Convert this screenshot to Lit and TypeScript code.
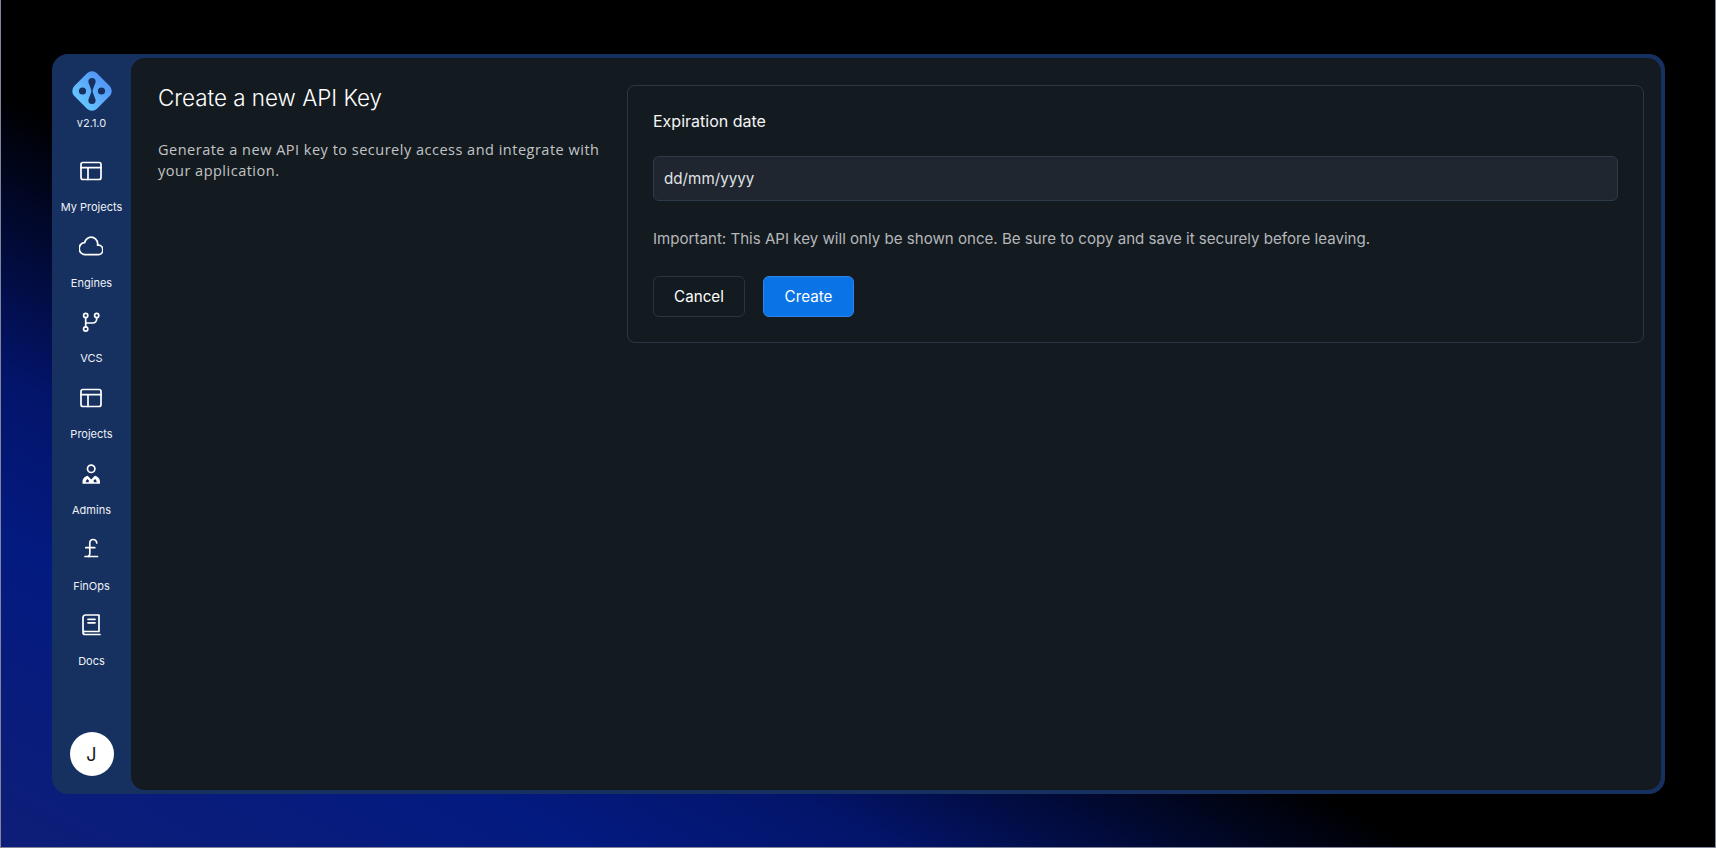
import { LitElement, html, css, svg } from "lit";
import { customElement } from "lit/decorators.js";

const layout = svg`<rect x="2" y="3.5" width="20" height="17" rx="2"/><path d="M2 8.700h20M9 8.700v11.800"/>`;
const cloud = svg`<path vector-effect="non-scaling-stroke" transform="translate(12 12.050) scale(1.180 1.340) translate(-12 -11.650)" d="M6.657 18c-2.572 0-4.657-2.007-4.657-4.483 0-2.475 2.085-4.482 4.657-4.482.393-1.762 1.794-3.2 3.675-3.773 1.88-.572 3.956-.193 5.444 1 1.488 1.19 2.162 3.007 1.77 4.769h.99c1.913 0 3.464 1.56 3.464 3.486 0 1.927-1.551 3.487-3.465 3.487H6.657Z"/>`;
const branch = svg`<circle cx="6.700" cy="5.500" r="2.100"/><circle cx="6.700" cy="19" r="2.100"/><circle cx="17.700" cy="5.500" r="2.100"/><path d="M6.700 7.600v9.300M17.700 7.600v1.400a4 4 0 0 1-4 4H6.700"/>`;
const admin = svg`<circle cx="12.200" cy="6.800" r="3.700"/><path class="solid" fill-rule="evenodd" d="M3.500 21.800v-2.200c0-2.900 2.500-5.500 5.200-5.800L12.200 17.400 15.800 13.800c2.700.3 5.200 2.900 5.200 5.800v2.200ZM6.800 20.200h2.700l.6-1.400-1.800-1.900c-.9.7-1.500 2-1.500 3.300ZM17.700 20.200h-2.700l-.6-1.400 1.800-1.900c.9.700 1.500 2 1.500 3.300Z"/>`;
const pound = svg`<path d="M17.800 6C17.400 3.700 15.800 2.500 14 2.500c-2 0-3.200 1.500-3.200 3.700v10.300c0 1.500-.6 2.500-1.700 3h9.400M6.800 10.700h9"/><path d="M6 19.500h4"/>`;
const book = svg`<path d="M4 18.500V4.500A2.500 2.500 0 0 1 6.500 2H20v16.500H6.500A2.500 2.500 0 0 0 4 19.500 2 2 0 0 0 6 21.500H21"/><path d="M9 6.300h7M9 9.800h7"/>`;

const items = [
  ["My Projects", layout],
  ["Engines", cloud],
  ["VCS", branch],
  ["Projects", layout],
  ["Admins", admin],
  ["FinOps", pound],
  ["Docs", book],
] as const;

@customElement("app-root")
export class AppRoot extends LitElement {
  static styles = css`
    :host {
      display: block;
      box-sizing: border-box;
      height: 848px;
      padding: 54px 50px 53px 51px;
      font-family: Inter, "Liberation Sans", sans-serif;
      color: #fff;
      border: solid #80859c;
      border-width: 0 1px 1px 1px;
      background: linear-gradient(28deg, #0e1e78 0%, #031a80 17.5%, #03146a 27%, #000 43%);
    }
    .frame {
      height: 100%;
      box-sizing: border-box;
      display: flex;
      background: #16305f;
      border-radius: 16px;
      padding: 4px 4px 4px 0;
    }
    .side {
      width: 79px;
      flex: none;
      display: flex;
      flex-direction: column;
      align-items: center;
      padding-top: 12px;
      box-sizing: border-box;
    }
    .logo {
      width: 42px;
      height: 42px;
      display: block;
    }
    .ver {
      font-size: 11px;
      line-height: 14px;
      margin-top: 4px;
      color: #e8edf5;
    }
    .nav {
      display: flex;
      flex-direction: column;
      align-items: center;
      margin-top: 28.500px;
      gap: 14.200px;
    }
    .item {
      display: flex;
      flex-direction: column;
      align-items: center;
      gap: 17.300px;
      height: 61.600px;
    }
    .item svg {
      width: 24px;
      height: 24px;
      fill: none;
      stroke: #fff;
      stroke-width: 1.700;
      stroke-linecap: round;
      stroke-linejoin: round;
      display: block;
    }
    .item svg .solid {
      fill: #fff;
      stroke: none;
    }
    .label {
      font-size: 11px;
      line-height: 14px;
      color: #eef2f8;
      white-space: nowrap;
    }
    .avatar {
      margin-top: auto;
      margin-bottom: 14px;
      width: 44px;
      height: 44px;
      border-radius: 50%;
      background: #fff;
      color: #14191e;
      display: flex;
      align-items: center;
      justify-content: center;
      font-size: 18px;
      font-weight: 400;
    }
    .main {
      flex: 1;
      min-width: 0;
      background: #141b20;
      border-radius: 14px;
      display: flex;
      gap: 26px;
      padding: 27px 17px 0 27px;
      align-items: flex-start;
    }
    .intro {
      width: 443px;
      flex: none;
    }
    h1 {
      margin: 0;
      font-size: 22.400px;
      line-height: 26px;
      font-weight: 300;
      color: #fff;
    }
    .intro p {
      margin: 27.500px 0 0;
      font-family: "Open Sans", sans-serif;
      font-size: 14.500px;
      letter-spacing: 0.500px;
      line-height: 21px;
      color: #c2c4c6;
    }
    .card {
      flex: 1;
      min-width: 0;
      box-sizing: border-box;
      height: 258px;
      border: 1px solid #2c3744;
      border-radius: 8px;
      padding: 25px;
    }
    .title {
      font-size: 16px;
      line-height: 20px;
      font-weight: 400;
      color: #f4f5f6;
    }
    .input {
      margin-top: 25px;
      height: 45px;
      box-sizing: border-box;
      background: #1f262f;
      border: 1px solid #2d3a48;
      border-radius: 6px;
      padding: 0 10px;
      display: flex;
      align-items: center;
      font-size: 15.200px;
      color: #e0e2e4;
    }
    .note {
      margin: 28px 0 0;
      font-size: 15.100px;
      line-height: 20px;
      color: #b4b7bb;
    }
    .actions {
      display: flex;
      gap: 18px;
      margin-top: 27px;
    }
    button {
      font-family: inherit;
      font-size: 15.200px;
      font-weight: 400;
      height: 41px;
      border-radius: 6px;
      color: #fff;
      padding: 0;
      box-sizing: border-box;
    }
    .cancel {
      width: 92px;
      background: transparent;
      border: 1px solid #2a3440;
    }
    .create {
      width: 91px;
      background: #0a73e6;
      border: 1px solid #2f86ea;
    }
  `;

  render() {
    return html`
      <div class="frame">
        <nav class="side">
          <svg class="logo" viewBox="0 0 42 42">
            <defs>
              <linearGradient id="lg" x1="0" y1="0" x2="0" y2="1">
                <stop offset="0" stop-color="#5297f6" />
                <stop offset="1" stop-color="#66c4ff" />
              </linearGradient>
            </defs>
            <rect x="5" y="5" width="32" height="32" rx="7" fill="url(#lg)" transform="rotate(45 21 21)" />
            <g fill="#16305f">
              <circle cx="11.500" cy="21" r="3.600" />
              <circle cx="30.500" cy="21" r="3.600" />
              <circle cx="21" cy="11.500" r="3.600" />
              <circle cx="21" cy="30.500" r="3.600" />
              <path d="M17.700 12.500C18.500 16 20.300 19 20.400 21 20.300 23 18.500 26 17.700 29.500h6.600C23.500 26 21.700 23 21.600 21 21.700 19 23.500 16 24.300 12.500Z" />
            </g>
          </svg>
          <div class="ver">v2.1.0</div>
          <div class="nav">
            ${items.map(
              ([name, icon]) => html`<div class="item">
                <svg viewBox="0 0 24 24">${icon}</svg>
                <span class="label">${name}</span>
              </div>`
            )}
          </div>
          <div class="avatar">J</div>
        </nav>
        <main class="main">
          <section class="intro">
            <h1>Create a new API Key</h1>
            <p>Generate a new API key to securely access and integrate with your application.</p>
          </section>
          <section class="card">
            <div class="title">Expiration date</div>
            <div class="input">dd/mm/yyyy</div>
            <p class="note">Important: This API key will only be shown once. Be sure to copy and save it securely before leaving.</p>
            <div class="actions">
              <button class="cancel">Cancel</button>
              <button class="create">Create</button>
            </div>
          </section>
        </main>
      </div>
    `;
  }
}
